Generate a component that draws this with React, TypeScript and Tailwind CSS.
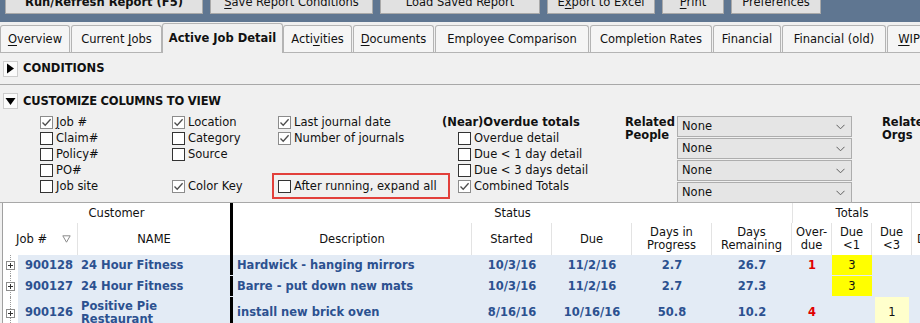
import React from "react";

const U = ({ children }: { children: React.ReactNode }) => <span className="underline underline-offset-2">{children}</span>;

const Check = ({ on, label }: { on: boolean; label: React.ReactNode }) => (
  <div className="flex h-[16px] items-center gap-[3px] whitespace-nowrap">
    <span
      className={`flex h-[13px] w-[13px] shrink-0 items-center justify-center border bg-white ${
        on ? "border-[#8c8c8c]" : "border-[#333333]"
      }`}
    >
      {on && (
        <svg width="11" height="11" viewBox="0 0 11 11">
          <path d="M1.5 5.5 L4.2 8.3 L9.6 2.2" stroke="#4d4d4d" strokeWidth="1.3" fill="none" />
        </svg>
      )}
    </span>
    <span>{label}</span>
  </div>
);

const Arrow = ({ down }: { down?: boolean }) => (
  <span className="flex h-[16px] w-[15px] shrink-0 items-center justify-center border border-[#cdcdcd] bg-[#fbfbfb]">
    <svg width="11" height="11" viewBox="0 0 11 11">
      {down ? <path d="M0.5 2 L10.5 2 L5.5 9 Z" fill="#000" /> : <path d="M2 0.5 L9 5.5 L2 10.5 Z" fill="#000" />}
    </svg>
  </span>
);

const Select = () => (
  <div className="flex h-[21px] w-[175px] items-center justify-between border border-[#adadad] bg-[#e5e5e5] pl-[4px] pr-[6px]">
    <span>None</span>
    <svg width="9" height="6" viewBox="0 0 9 6">
      <path d="M0.5 0.8 L4.5 4.8 L8.5 0.8" stroke="#606060" strokeWidth="1" fill="none" />
    </svg>
  </div>
);

const Plus = () => (
  <div className="relative flex h-full w-[15px] shrink-0 items-center justify-center bg-white">
    <div className="absolute left-[7px] top-0 h-full border-l border-dotted border-[#9a9a9a]" />
    <svg className="relative" width="9" height="9" viewBox="0 0 9 9">
      <rect x="0.5" y="0.5" width="8" height="8" fill="#fff" stroke="#8c8c8c" />
      <path d="M2 4.5 H7 M4.5 2 V7" stroke="#333" />
    </svg>
  </div>
);

const buttons: { w: string; label: React.ReactNode; bold?: boolean }[] = [
  { w: "w-[198px]", label: "Run/Refresh Report (F5)", bold: true },
  { w: "w-[163px]", label: <><U>S</U>ave Report Conditions</> },
  { w: "w-[160px]", label: "Load Saved Report" },
  { w: "w-[108px]", label: <>E<U>x</U>port to Excel</> },
  { w: "w-[62px]", label: <><U>P</U>rint</> },
  { w: "w-[90px]", label: "Preferences" },
];

const tabs: { w: string; label: React.ReactNode; active?: boolean }[] = [
  { w: "w-[70px]", label: <><U>O</U>verview</> },
  { w: "w-[91px]", label: <>Current <U>J</U>obs</> },
  { w: "w-[121px]", label: "Active Job Detail", active: true },
  { w: "w-[69px]", label: <>Acti<U>v</U>ities</> },
  { w: "w-[81px]", label: <><U>D</U>ocuments</> },
  { w: "w-[154px]", label: "Employee Comparison" },
  { w: "w-[122px]", label: "Completion Rates" },
  { w: "w-[68px]", label: "Financial" },
  { w: "w-[104px]", label: "Financial (old)" },
  { w: "w-[44px]", label: <><U>W</U>IP</> },
];

const rows = [
  { job: "900128", name: ["24 Hour Fitness"], desc: "Hardwick - hanging mirrors", st: "10/3/16", due: "11/2/16", dip: "2.7", dr: "26.7", od: "1", d1: "3", d3: "", h: "h-[21px]" },
  { job: "900127", name: ["24 Hour Fitness"], desc: "Barre - put down new mats", st: "10/3/16", due: "11/2/16", dip: "2.7", dr: "27.3", od: "", d1: "3", d3: "", h: "h-[21px]" },
  { job: "900126", name: ["Positive Pie", "Restaurant"], desc: "install new brick oven", st: "8/16/16", due: "10/16/16", dip: "50.8", dr: "10.2", od: "4", d1: "", d3: "1", h: "h-[32px]" },
];

const hd = "flex shrink-0 items-center justify-center border-r border-[#e3e3e3] text-center";
const dc = "flex shrink-0 items-center justify-center";

export default function App() {
  return (
    <div className="h-[323px] w-[920px] overflow-hidden bg-[#f0f0f0] font-['DejaVu_Sans',sans-serif] text-[11.5px] leading-[13px] text-[#111]">
      {/* toolbar */}
      <div className="flex h-[22px] items-end gap-[7px] overflow-hidden bg-[#5f7691] pb-[8px] pl-[5px]">
        {buttons.map((b, i) => (
          <div
            key={i}
            className={`flex h-[23px] shrink-0 items-center justify-center border border-[#a9a9a9] bg-[#e1e1e1] ${b.w} ${b.bold ? "font-bold" : ""}`}
          >
            <span className="whitespace-nowrap">{b.label}</span>
          </div>
        ))}
      </div>

      {/* tabs */}
      <div className="flex h-[31px] items-end gap-[1px] border-b border-[#b4b4b4]">
        {tabs.map((t, i) =>
          t.active ? (
            <div
              key={i}
              className={`-mx-px -mb-px flex h-[30px] shrink-0 items-center justify-center rounded-t-[3px] border border-b-0 border-[#b4b4b4] bg-[#f0f0f0] font-bold ${t.w}`}
            >
              <span className="whitespace-nowrap">{t.label}</span>
            </div>
          ) : (
            <div
              key={i}
              className={`flex h-[27px] shrink-0 items-center justify-center rounded-t-[3px] border border-b-0 border-[#b4b4b4] bg-[#f5f5f5] pt-[1px] ${t.w}`}
            >
              <span className="whitespace-nowrap">{t.label}</span>
            </div>
          )
        )}
      </div>

      {/* conditions */}
      <div className="flex h-[32px] items-center gap-[5px] border-b border-[#a8a8a8] pl-[3px] font-bold">
        <Arrow />
        <span>CONDITIONS</span>
      </div>

      {/* customize */}
      <div className="h-[118px] border-b border-[#a8a8a8]">
        <div className="flex items-center gap-[5px] pl-[3px] pt-[8px] font-bold">
          <Arrow down />
          <span className="tracking-[-0.2px]">CUSTOMIZE COLUMNS TO VIEW</span>
        </div>
        <div className="mt-[5px] flex pl-[40px]">
          <div className="w-[132px] shrink-0">
            <Check on label={<><U>J</U>ob #</>} />
            <Check on={false} label="Claim#" />
            <Check on={false} label="Policy#" />
            <Check on={false} label="PO#" />
            <Check on={false} label="Job site" />
          </div>
          <div className="w-[106px] shrink-0">
            <Check on label="Location" />
            <Check on={false} label="Category" />
            <Check on={false} label="Source" />
            <div className="h-[16px]" />
            <Check on label="Color Key" />
          </div>
          <div className="w-[164px] shrink-0">
            <Check on label="Last journal date" />
            <Check on label="Number of journals" />
            <div className="h-[16px]" />
            <div className="h-[16px]" />
            <div className="-my-[5px] -ml-[6px] w-[178px] border-2 border-[#e2403b] py-[3px] pl-[4px]">
              <Check on={false} label="After running, expand all" />
            </div>
          </div>
          <div className="w-[183px] shrink-0">
            <div className="flex h-[16px] items-center font-bold whitespace-nowrap">(Near)Overdue totals</div>
            <div className="pl-[16px]">
              <Check on={false} label="Overdue detail" />
              <Check on={false} label="Due < 1 day detail" />
              <Check on={false} label="Due < 3 days detail" />
              <Check on label="Combined Totals" />
            </div>
          </div>
          <div className="w-[52px] shrink-0 pt-[2px] font-bold">
            Related
            <br />
            People
          </div>
          <div className="flex w-[175px] shrink-0 flex-col gap-[1px] pt-[2px]">
            <Select />
            <Select />
            <Select />
            <Select />
          </div>
          <div className="ml-[30px] shrink-0 pt-[2px] font-bold whitespace-nowrap">
            Related
            <br />
            Orgs
          </div>
        </div>
      </div>

      {/* grid */}
      <div className="ml-[2px] border-l border-[#a0a0a0] bg-white">
        <div className="flex h-[20px] items-center">
          <div className="flex h-full w-[227px] shrink-0 items-center justify-center pt-[1px]">Customer</div>
          <div className="h-full w-[3px] shrink-0 bg-black" />
          <div className="flex h-full w-[559px] shrink-0 items-center justify-center pt-[1px]">Status</div>
          <div className="flex h-full w-[120px] shrink-0 items-center justify-center border-x border-[#e3e3e3] pt-[1px]">Totals</div>
        </div>
        <div className="flex h-[32px]">
          <div className="flex w-[75px] shrink-0 items-center justify-between border-r border-[#e3e3e3] pl-[13px] pr-[6px]">
            <span>Job #</span>
            <svg width="9" height="8" viewBox="0 0 9 8">
              <path d="M0.8 0.8 H8.2 L4.5 7.2 Z" fill="none" stroke="#8a8a8a" />
            </svg>
          </div>
          <div className="flex w-[152px] shrink-0 items-center justify-center">NAME</div>
          <div className="w-[3px] shrink-0 bg-black" />
          <div className={`w-[239px] ${hd}`}>Description</div>
          <div className={`w-[80px] ${hd}`}>Started</div>
          <div className={`w-[80px] ${hd}`}>Due</div>
          <div className={`w-[80px] ${hd}`}>
            Days in
            <br />
            Progress
          </div>
          <div className={`w-[80px] ${hd}`}>
            Days
            <br />
            Remaining
          </div>
          <div className={`w-[40px] ${hd}`}>
            Over-
            <br />
            due
          </div>
          <div className={`w-[40px] ${hd}`}>
            Due
            <br />
            &lt;1
          </div>
          <div className={`w-[40px] ${hd}`}>
            Due
            <br />
            &lt;3
          </div>
          <div className="flex flex-1 items-center overflow-hidden pl-[5px] whitespace-nowrap">Days</div>
        </div>

        {rows.map((r, i) => (
          <div key={i} className={`flex ${r.h} font-bold text-[#2c5190]`}>
            <Plus />
            <div className="flex h-full flex-1 border-b border-[#e3ebf5] bg-[#e3ebf5]">
              <div className="flex w-[60px] shrink-0 items-center justify-end pr-[5px]">{r.job}</div>
              <div className="flex w-[152px] shrink-0 flex-col justify-center pl-[3px]">
                {r.name.map((n) => (
                  <span key={n}>{n}</span>
                ))}
              </div>
              <div className="w-[3px] shrink-0 bg-black" />
              <div className="flex w-[239px] shrink-0 items-center pl-[4px]">{r.desc}</div>
              <div className={`w-[80px] ${dc}`}>{r.st}</div>
              <div className={`w-[80px] ${dc}`}>{r.due}</div>
              <div className={`w-[80px] ${dc}`}>{r.dip}</div>
              <div className={`w-[80px] ${dc}`}>{r.dr}</div>
              <div className={`w-[40px] ${dc} text-[#e00000]`}>{r.od}</div>
              <div className={`w-[40px] ${dc} font-normal text-[#111] ${r.d1 ? "bg-[#ffff00]" : ""}`}>{r.d1}</div>
              <div className="flex w-[40px] shrink-0 justify-center px-[3px]">
                <div className={`flex h-full w-full items-center justify-center font-normal text-[#111] ${r.d3 ? "bg-[#ffffcc]" : ""}`}>{r.d3}</div>
              </div>
              <div className="flex-1" />
            </div>
          </div>
        ))}
      </div>
    </div>
  );
}
